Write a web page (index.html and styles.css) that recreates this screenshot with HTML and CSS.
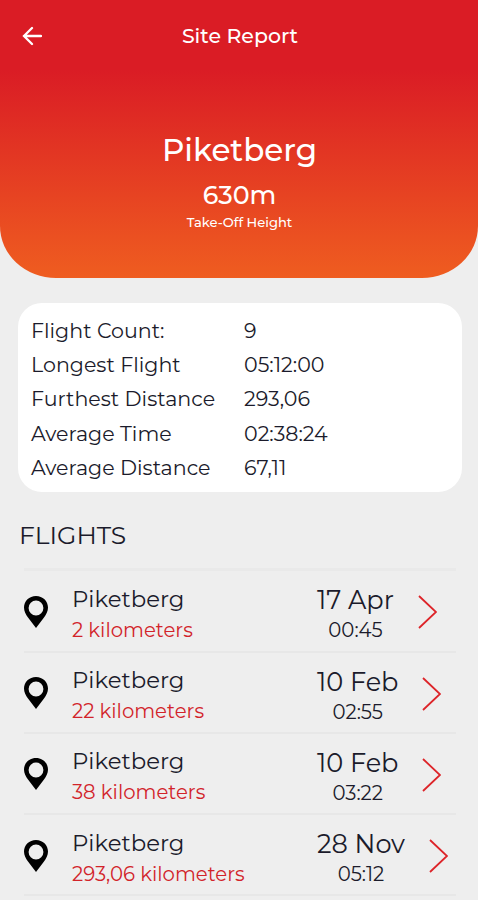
FILE: index.html
```html
<!DOCTYPE html>
<html lang="en">
<head>
  <meta charset="UTF-8">
  <meta name="viewport" content="width=device-width, initial-scale=1.0">
  <title>Site Report</title>
  <link rel="stylesheet" href="styles.css">
</head>
<body>
  <!-- Shared icons -->
  <svg class="sprite" width="0" height="0">
    <symbol id="pin" viewBox="0 0 24 32">
      <path fill-rule="evenodd" d="M12 0C5.2 0 0 5 0 11.6C0 15.4 1.8 18.6 4 21.6L12 32L20 21.6C22.2 18.6 24 15.4 24 11.6C24 5 18.8 0 12 0ZM12 4.6A7.4 7.4 0 1 1 12 19.4A7.4 7.4 0 1 1 12 4.6Z"/>
    </symbol>
    <symbol id="chevron" viewBox="0 0 19 34">
      <path d="M1 1L18 17L1 33" fill="none" stroke="#dd2429" stroke-width="1.8"/>
    </symbol>
  </svg>

  <header class="header">
    <div class="top-bar">
      <svg class="back" viewBox="0 0 20 20">
        <path d="M10 2L2 10L10 18M2 10H19" fill="none" stroke="#fff" stroke-width="2.3" stroke-linecap="round"/>
      </svg>
      <h1 class="title">Site Report</h1>
    </div>
    <h2 class="site-name">Piketberg</h2>
    <p class="height">630m</p>
    <p class="height-label">Take-Off Height</p>
  </header>

  <main>
    <dl class="stats">
      <dt>Flight Count:</dt><dd>9</dd>
      <dt>Longest Flight</dt><dd>05:12:00</dd>
      <dt>Furthest Distance</dt><dd>293,06</dd>
      <dt>Average Time</dt><dd>02:38:24</dd>
      <dt>Average Distance</dt><dd>67,11</dd>
    </dl>

    <h3 class="section-title">FLIGHTS</h3>

    <ul class="flights">
      <li class="flight">
        <svg class="pin"><use href="#pin"/></svg>
        <div class="place">
          <p class="name">Piketberg</p>
          <p class="distance">2 kilometers</p>
        </div>
        <div class="when">
          <p class="date">17 Apr</p>
          <p class="time">00:45</p>
        </div>
        <svg class="chevron"><use href="#chevron"/></svg>
      </li>
      <li class="flight">
        <svg class="pin"><use href="#pin"/></svg>
        <div class="place">
          <p class="name">Piketberg</p>
          <p class="distance">22 kilometers</p>
        </div>
        <div class="when">
          <p class="date">10 Feb</p>
          <p class="time">02:55</p>
        </div>
        <svg class="chevron"><use href="#chevron"/></svg>
      </li>
      <li class="flight">
        <svg class="pin"><use href="#pin"/></svg>
        <div class="place">
          <p class="name">Piketberg</p>
          <p class="distance">38 kilometers</p>
        </div>
        <div class="when">
          <p class="date">10 Feb</p>
          <p class="time">03:22</p>
        </div>
        <svg class="chevron"><use href="#chevron"/></svg>
      </li>
      <li class="flight">
        <svg class="pin"><use href="#pin"/></svg>
        <div class="place">
          <p class="name">Piketberg</p>
          <p class="distance">293,06 kilometers</p>
        </div>
        <div class="when">
          <p class="date">28 Nov</p>
          <p class="time">05:12</p>
        </div>
        <svg class="chevron"><use href="#chevron"/></svg>
      </li>
    </ul>
  </main>
</body>
</html>
```
FILE: styles.css
```css
* {
  margin: 0;
  padding: 0;
  box-sizing: border-box;
}

body {
  font-family: 'Montserrat', 'Inter', sans-serif;
  background-color: #eeeeee;
  color: #1b1b2b;
  height: 100vh;
  overflow: hidden;
}

.sprite {
  display: block;
}

/* Header */
.header {
  height: 278px;
  padding-left: 1px;
  background: linear-gradient(#da1c25 25%, #ef5d20);
  border-radius: 0 0 56px 56px / 0 0 52px 52px;
  color: white;
  text-align: center;
}

.top-bar {
  display: grid;
  grid-template-columns: 20px 1fr 20px;
  align-items: center;
  height: 71px;
  padding: 0 20px 0 21px;
}

.back {
  width: 20px;
  height: 20px;
}

.title {
  font-size: 20.5px;
  font-weight: 500;
}

.site-name {
  margin-top: 57px;
  font-size: 31px;
  line-height: 44px;
  font-weight: 500;
}

.height {
  margin-top: 6px;
  font-size: 25.3px;
  line-height: 34px;
  font-weight: 500;
}

.height-label {
  font-size: 13.1px;
  line-height: 20px;
  font-weight: 500;
}

/* Summary card */
.stats {
  display: grid;
  grid-template-columns: 213px 1fr;
  grid-auto-rows: 34.4px;
  align-items: center;
  margin: 25px 16px 0 18px;
  padding: 10px 13px 7px;
  background: white;
  border-radius: 24px;
  font-size: 20.6px;
}

.section-title {
  margin: 25px 19px 0;
  font-size: 25px;
  line-height: 36px;
  font-weight: 400;
}

/* Flight list */
.flights {
  margin: 15.4px 22px 0 24px;
  border-top: 3px solid #e9e9e9;
  list-style: none;
}

.flight {
  display: flex;
  align-items: center;
  height: 81.2px;
  padding-top: 2px;
  border-bottom: 2px solid #e7e7e7;
}

.pin {
  width: 24px;
  height: 32px;
}

.place {
  width: 245px;
  margin-left: 24px;
  padding-top: 6px;
}

.name {
  font-size: 22.8px;
  line-height: 31px;
}

.distance {
  font-size: 19.7px;
  line-height: 31px;
  color: #d2232a;
}

.when {
  padding-top: 7px;
  text-align: center;
}

.date {
  font-size: 25.6px;
  line-height: 31px;
  white-space: nowrap;
}

.time {
  font-size: 19.7px;
  line-height: 31px;
}

.chevron {
  width: 19px;
  height: 34px;
  margin: 1px 0 0 24px;
}
```
